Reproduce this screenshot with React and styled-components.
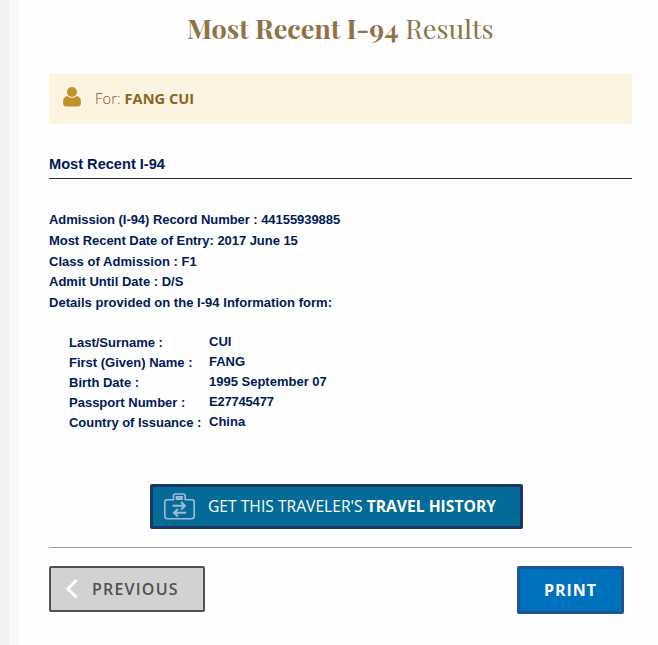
import React from "react";
import styled, { createGlobalStyle } from "styled-components";

const GlobalStyle = createGlobalStyle`
  *, *::before, *::after { box-sizing: border-box; }
  body { margin: 0; background: #fff; }
`;

const Page = styled.div`
  display: flex;
  width: 658px;
  height: 645px;
  overflow: hidden;
  background: #fefefe;
`;

const Gutter = styled.div`
  flex: none;
  width: ${(p) => p.$width}px;
  background: ${(p) => p.$color};
`;

const Content = styled.main`
  display: flex;
  flex-direction: column;
  width: 613px;
  padding-left: 30px;
  font-family: "Liberation Sans", Arial, sans-serif;
  color: #001a57;
`;

const Title = styled.h1`
  height: 74px;
  margin: 0;
  padding: 9px 0 0 138px;
  font-family: "Playfair Display", "Liberation Serif", serif;
  font-size: 27.05px;
  line-height: 38px;
  font-weight: 400;
  color: #8f7347;
  white-space: pre;

  strong { font-weight: 700; }
`;

const Banner = styled.div`
  display: flex;
  align-items: center;
  gap: 14px;
  height: 50px;
  padding: 0 0 2px 14px;
  background: #fdf3e1;
  font-family: "Open Sans", sans-serif;
  font-size: 14.6px;
  color: #8a6420;
  white-space: pre;

  svg { margin-bottom: 3px; }
  strong { font-weight: 700; }
`;

const Light = styled.span`
  font-weight: 300;
  letter-spacing: 0.15px;
  color: #755216;
`;

const SectionTitle = styled.h2`
  height: 55px;
  margin: 0;
  padding-top: 30px;
  border-bottom: 1px solid #2c2c34;
  font-size: 14.6px;
  line-height: 20px;
  font-weight: 700;
`;

const Summary = styled.div`
  padding-top: 31px;
  height: 153px;
  font-size: 13px;
  font-weight: 700;
  line-height: 20.8px;
`;

const Line = styled.div`
  white-space: pre;
  letter-spacing: ${(p) => p.$spacing || "0"};
`;

const Details = styled.dl`
  display: grid;
  grid-template-columns: 140px 1fr;
  grid-auto-rows: 20px;
  height: 152px;
  margin: 0;
  padding-left: 20px;
  font-size: 13px;
  line-height: 20px;
  font-weight: 700;
  white-space: pre;
`;

const Term = styled.dt`
  padding-top: 1px;
  letter-spacing: ${(p) => p.$spacing || "0"};
`;

const Value = styled.dd`
  margin: 0;
  letter-spacing: ${(p) => p.$spacing || "0"};
`;

const Button = styled.button`
  display: flex;
  align-items: center;
  margin: 0;
  padding: 0;
  border-radius: 2px;
  font-family: "Open Sans", sans-serif;
  white-space: pre;
`;

const HistoryButton = styled(Button)`
  width: 373px;
  height: 45px;
  margin-left: 101px;
  padding: 0 0 1px 11px;
  gap: 13px;
  border: 3px solid #1c3764;
  background: #046a98;
  color: #fff;
  font-size: 15.65px;

  strong { font-weight: 700; }
`;

const Actions = styled.div`
  display: flex;
  justify-content: space-between;
  align-items: flex-start;
  margin-top: 18px;
  padding: 18px 8px 0 0;
  border-top: 1px solid #9c9c9c;
`;

const PreviousButton = styled(Button)`
  width: 156px;
  height: 46px;
  padding-left: 14px;
  gap: 13px;
  border: 2px solid #515151;
  background: #d2d2d2;
  color: #505050;
  font-size: 16px;
  font-weight: 600;
  letter-spacing: 1.2px;
`;

const PrintButton = styled(Button)`
  justify-content: center;
  width: 107px;
  height: 48px;
  border: 3px solid #205493;
  background: #0071bc;
  color: #fff;
  font-size: 16px;
  font-weight: 700;
  letter-spacing: 1px;
`;

const UserIcon = () => (
  <svg width="18" height="20" viewBox="0 0 18 20" fill="#bf922b">
    <circle cx="9" cy="5" r="5" />
    <path d="M4.2 9Q9 13 13.8 9Q18 9.8 18 15.5Q18 19.4 14.8 19.4H3.2Q0 19.4 0 15.5Q0 9.8 4.2 9Z" />
  </svg>
);

const SuitcaseIcon = () => (
  <svg width="31" height="27" viewBox="0 0 31 27" fill="none" stroke="#9fbdd2">
    <path strokeWidth="1.6" d="M9.5 6.7H3.2Q.8 6.7.8 9V23Q.8 25.8 3.5 25.8H27.3Q30.2 25.8 30.2 23V9Q30.2 6.7 27.8 6.7H21.2V3Q21.2 1 19.2 1H11.5Q9.5 1 9.5 3Z" />
    <path strokeWidth="1.8" d="M12.6 6V3.8H18V6Z" />
    <path strokeWidth="2" d="M8.5 12.8H21M17 9L21 12.8L17 16.6M22.2 19.7H10M14 16L10 19.7L14 23.4" />
  </svg>
);

const ChevronIcon = () => (
  <svg width="14" height="22" viewBox="0 0 14 22" fill="none" stroke="#fff" strokeWidth="2.8">
    <path d="M11.6 2L2.8 10.7L11.6 19.4" />
  </svg>
);

const summary = [
  { text: "Admission (I-94) Record Number : 44155939885", spacing: "-0.05px" },
  { text: "Most Recent Date of Entry: 2017 June 15", spacing: "-0.05px" },
  { text: "Class of Admission : F1", spacing: "0.04px" },
  { text: "Admit Until Date : D/S" },
  { text: "Details provided on the I-94 Information form:", spacing: "0.03px" },
];

const details = [
  { label: "Last/Surname :", value: "CUI" },
  { label: "First (Given) Name :", value: "FANG" },
  { label: "Birth Date :", value: "1995 September 07" },
  { label: "Passport Number :", value: "E27745477", valueSpacing: "-0.2px" },
  { label: "Country of Issuance :", labelSpacing: "-0.03px", value: "China" },
];

export default function App() {
  return (
    <>
      <GlobalStyle />
      <Page>
        <Gutter $width={9} $color="#f1f1f1" />
        <Gutter $width={10} $color="#f9f9f9" />
        <Content>
          <Title><strong>Most Recent I-94</strong> Results</Title>
          <Banner>
            <UserIcon />
            <span><Light>For: </Light><strong>FANG CUI</strong></span>
          </Banner>
          <SectionTitle>Most Recent I-94</SectionTitle>
          <Summary>
            {summary.map((s) => (
              <Line key={s.text} $spacing={s.spacing}>{s.text}</Line>
            ))}
          </Summary>
          <Details>
            {details.map((d) => (
              <React.Fragment key={d.label}>
                <Term $spacing={d.labelSpacing}>{d.label}</Term>
                <Value $spacing={d.valueSpacing}>{d.value}</Value>
              </React.Fragment>
            ))}
          </Details>
          <HistoryButton>
            <SuitcaseIcon />
            <span>GET THIS TRAVELER'S <strong>TRAVEL HISTORY</strong></span>
          </HistoryButton>
          <Actions>
            <PreviousButton>
              <ChevronIcon />
              PREVIOUS
            </PreviousButton>
            <PrintButton>PRINT</PrintButton>
          </Actions>
        </Content>
      </Page>
    </>
  );
}
